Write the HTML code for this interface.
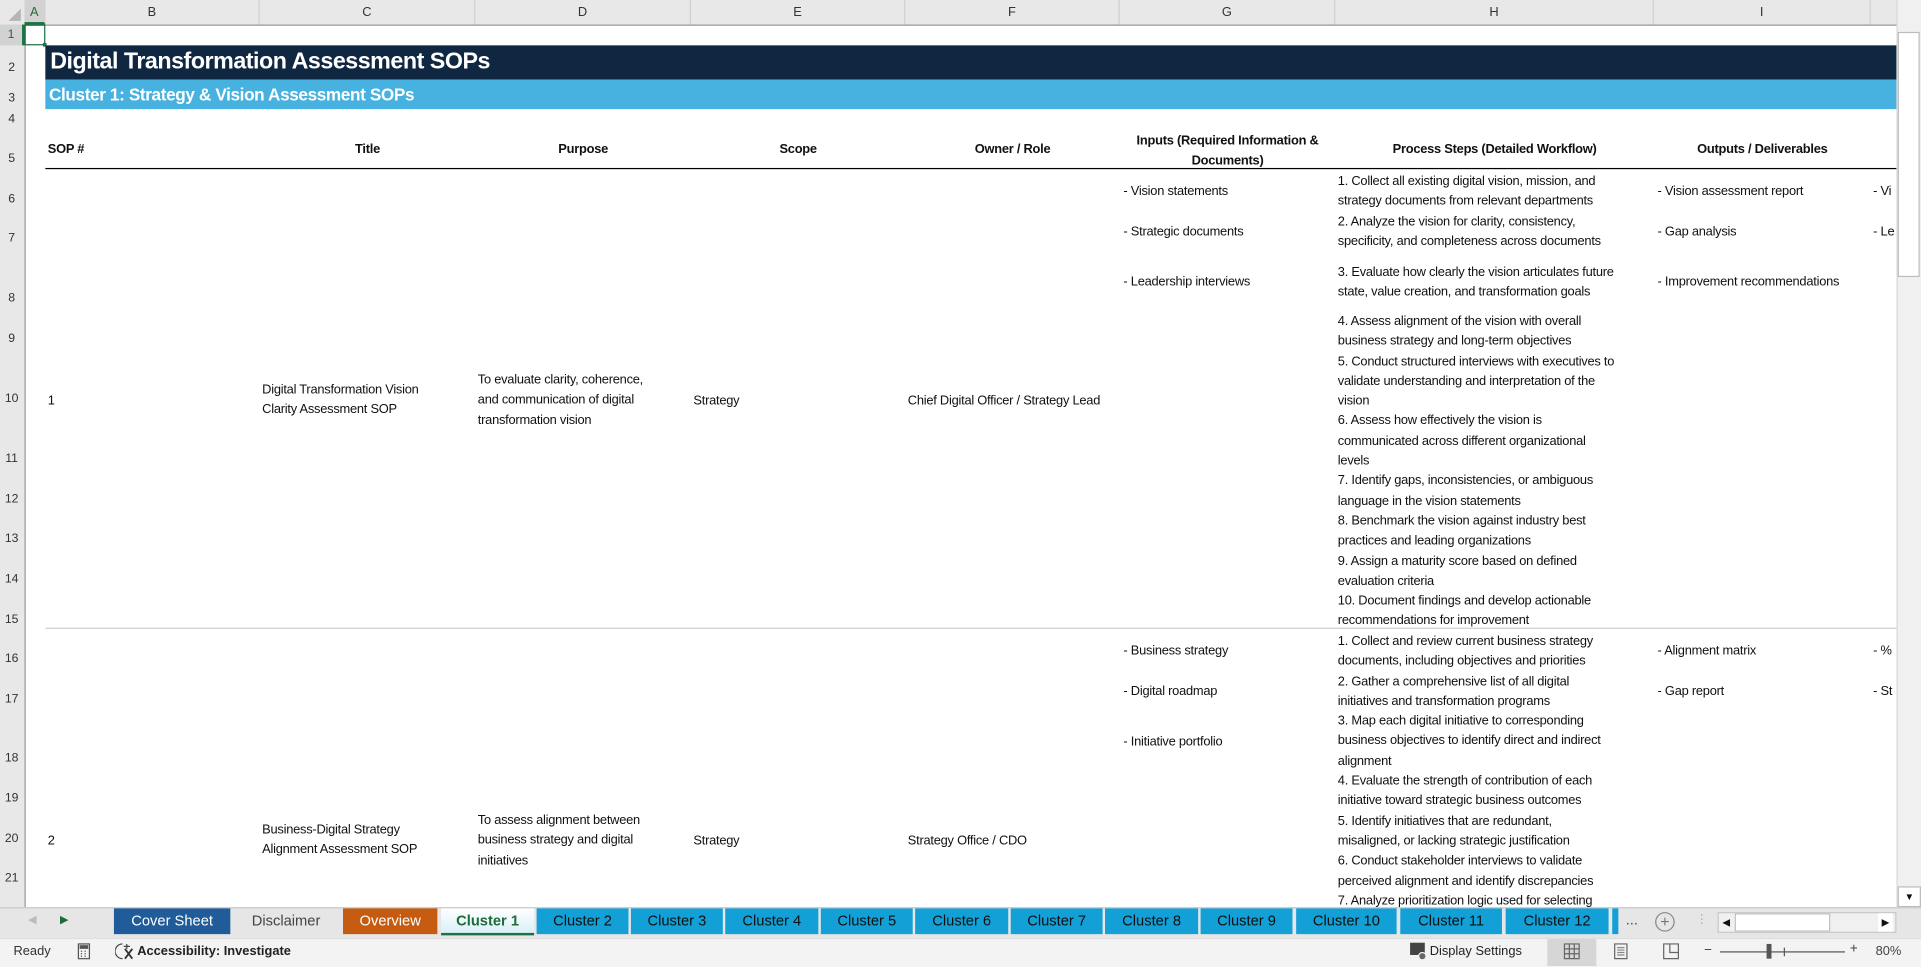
<!DOCTYPE html>
<html><head><meta charset="utf-8"><style>
html,body{margin:0;padding:0;width:1921px;height:966px;overflow:hidden;background:#fff}
#w{position:absolute;left:0;top:0;width:1568px;height:788px;transform:scale(1.2251,1.2259);transform-origin:0 0;font-family:"Liberation Sans Narrow","Liberation Sans",sans-serif;color:#111}
.a{position:absolute;white-space:nowrap}
.t{font-size:10.5px;letter-spacing:-0.2px;line-height:16.3px;margin-top:2px}
.h{font-size:10.5px;font-weight:bold;letter-spacing:-0.2px;margin-top:1px}
.ch{position:absolute;top:0;height:20px;line-height:20px;font-size:10.5px;color:#333;text-align:center;border-right:1px solid #d0d0d0}
.rh{position:absolute;left:0;width:19px;font-size:10px;color:#333;text-align:center;margin-top:2px}
.tab{position:absolute;top:741px;height:21px;line-height:20px;font-size:12px;text-align:center;color:#111;background:#12a0d7}
</style></head><body><div id="w">
<div class="a" style="left:0;top:0;width:1568px;height:20px;background:#e8e8e8;border-bottom:1px solid #9a9a9a"></div>
<div class="a" style="left:0;top:20px;width:20px;height:720px;background:#e8e8e8;border-right:1px solid #9a9a9a"></div>
<svg class="a" style="left:6px;top:6px" width="12" height="12"><path d="M11 1V11H1Z" fill="#b5b5b5"/></svg>
<div class="ch" style="left:20px;width:16px;background:#d2d2d2;color:#1e6b3a;border-bottom:2px solid #1e7145;height:18px">A</div>
<div class="ch" style="left:37px;width:174px">B</div>
<div class="ch" style="left:212px;width:175px">C</div>
<div class="ch" style="left:388px;width:175px">D</div>
<div class="ch" style="left:564px;width:174px">E</div>
<div class="ch" style="left:739px;width:174px">F</div>
<div class="ch" style="left:914px;width:175px">G</div>
<div class="ch" style="left:1090px;width:259px">H</div>
<div class="ch" style="left:1350px;width:176px">I</div>
<div class="rh" style="top:20px;height:17px;line-height:17px;background:#d2d2d2;color:#1e6b3a;border-right:2px solid #1e7145;width:18px;margin-top:0">1</div>
<div class="rh" style="top:48px">2</div><div class="rh" style="top:73px">3</div><div class="rh" style="top:90px">4</div><div class="rh" style="top:122px">5</div><div class="rh" style="top:155px">6</div><div class="rh" style="top:187px">7</div><div class="rh" style="top:236px">8</div><div class="rh" style="top:269px">9</div><div class="rh" style="top:318px">10</div><div class="rh" style="top:367px">11</div><div class="rh" style="top:400px">12</div><div class="rh" style="top:432px">13</div><div class="rh" style="top:465px">14</div><div class="rh" style="top:498px">15</div><div class="rh" style="top:530px">16</div><div class="rh" style="top:563px">17</div><div class="rh" style="top:611px">18</div><div class="rh" style="top:644px">19</div><div class="rh" style="top:677px">20</div><div class="rh" style="top:709px">21</div>
<div class="a" style="left:20px;top:20px;width:15px;height:15px;border:1.5px solid #1e7145"></div>
<div class="a" style="left:35px;top:35px;width:3px;height:3px;background:#1e7145"></div>
<div class="a" style="left:37px;top:37px;width:1511px;height:28px;background:#0f2740"></div>
<div class="a" style="left:41px;top:40px;font-size:19px;font-weight:bold;color:#fff;letter-spacing:-0.4px">Digital Transformation Assessment SOPs</div>
<div class="a" style="left:37px;top:65px;width:1511px;height:24px;background:#47b1e0"></div>
<div class="a" style="left:40px;top:69px;font-size:14px;font-weight:bold;color:#fff;letter-spacing:-0.3px">Cluster 1: Strategy &amp; Vision Assessment SOPs</div>
<div class="a h" style="left:39px;top:115px">SOP #</div>
<div class="a h" style="left:212px;width:176px;text-align:center;top:115px">Title</div>
<div class="a h" style="left:388px;width:176px;text-align:center;top:115px">Purpose</div>
<div class="a h" style="left:564px;width:175px;text-align:center;top:115px">Scope</div>
<div class="a h" style="left:739px;width:175px;text-align:center;top:115px">Owner / Role</div>
<div class="a h" style="left:914px;width:176px;text-align:center;top:106px;line-height:16px">Inputs (Required Information &amp;<br>Documents)</div>
<div class="a h" style="left:1090px;width:260px;text-align:center;top:115px">Process Steps (Detailed Workflow)</div>
<div class="a h" style="left:1350px;width:177px;text-align:center;top:115px">Outputs / Deliverables</div>
<div class="a" style="left:37px;top:137px;width:1511px;height:1px;background:#000"></div>
<div class="a" style="left:37px;top:512px;width:1511px;height:1px;background:#cfcfcf"></div>
<div class="a t" style="left:39px;top:317px">1</div>
<div class="a t" style="left:214px;top:308px">Digital Transformation Vision<br>Clarity Assessment SOP</div>
<div class="a t" style="left:390px;top:300px">To evaluate clarity, coherence,<br>and communication of digital<br>transformation vision</div>
<div class="a t" style="left:566px;top:317px">Strategy</div>
<div class="a t" style="left:741px;top:317px">Chief Digital Officer / Strategy Lead</div>
<div class="a t" style="left:917px;top:146px">- Vision statements</div>
<div class="a t" style="left:917px;top:179px">- Strategic documents</div>
<div class="a t" style="left:917px;top:220px">- Leadership interviews</div>
<div class="a t" style="left:1092px;top:138px">1. Collect all existing digital vision, mission, and<br>strategy documents from relevant departments<br>2. Analyze the vision for clarity, consistency,<br>specificity, and completeness across documents</div>
<div class="a t" style="left:1092px;top:212px">3. Evaluate how clearly the vision articulates future<br>state, value creation, and transformation goals</div>
<div class="a t" style="left:1092px;top:252px">4. Assess alignment of the vision with overall<br>business strategy and long-term objectives<br>5. Conduct structured interviews with executives to<br>validate understanding and interpretation of the<br>vision<br>6. Assess how effectively the vision is<br>communicated across different organizational<br>levels<br>7. Identify gaps, inconsistencies, or ambiguous<br>language in the vision statements<br>8. Benchmark the vision against industry best<br>practices and leading organizations<br>9. Assign a maturity score based on defined<br>evaluation criteria<br>10. Document findings and develop actionable<br>recommendations for improvement</div>
<div class="a t" style="left:1353px;top:146px">- Vision assessment report</div>
<div class="a t" style="left:1353px;top:179px">- Gap analysis</div>
<div class="a t" style="left:1353px;top:220px">- Improvement recommendations</div>
<div class="a t" style="left:1529px;top:146px;width:19px;overflow:hidden">- Vi</div>
<div class="a t" style="left:1529px;top:179px;width:19px;overflow:hidden">- Le</div>
<div class="a t" style="left:39px;top:676px">2</div>
<div class="a t" style="left:214px;top:667px">Business-Digital Strategy<br>Alignment Assessment SOP</div>
<div class="a t" style="left:390px;top:659px">To assess alignment between<br>business strategy and digital<br>initiatives</div>
<div class="a t" style="left:566px;top:676px">Strategy</div>
<div class="a t" style="left:741px;top:676px">Strategy Office / CDO</div>
<div class="a t" style="left:917px;top:521px">- Business strategy</div>
<div class="a t" style="left:917px;top:554px">- Digital roadmap</div>
<div class="a t" style="left:917px;top:595px">- Initiative portfolio</div>
<div class="a t" style="left:1092px;top:513px">1. Collect and review current business strategy<br>documents, including objectives and priorities<br>2. Gather a comprehensive list of all digital<br>initiatives and transformation programs<br>3. Map each digital initiative to corresponding<br>business objectives to identify direct and indirect<br>alignment<br>4. Evaluate the strength of contribution of each<br>initiative toward strategic business outcomes<br>5. Identify initiatives that are redundant,<br>misaligned, or lacking strategic justification<br>6. Conduct stakeholder interviews to validate<br>perceived alignment and identify discrepancies<br>7. Analyze prioritization logic used for selecting</div>
<div class="a t" style="left:1353px;top:521px">- Alignment matrix</div>
<div class="a t" style="left:1353px;top:554px">- Gap report</div>
<div class="a t" style="left:1529px;top:521px;width:19px;overflow:hidden">- %</div>
<div class="a t" style="left:1529px;top:554px;width:19px;overflow:hidden">- St</div>
<div class="a" style="left:1548px;top:0;width:20px;height:740px;background:#f0f0f0;border-left:1px solid #d8d8d8"></div>
<div class="a" style="left:1549px;top:26px;width:16px;height:198px;background:#fff;border:1px solid #bcbcbc"></div>
<div class="a" style="left:1549px;top:723px;width:17px;height:15px;background:#fff;border:1px solid #bcbcbc;font-size:8px;text-align:center;line-height:15px">▼</div>
<div class="a" style="left:0;top:740px;width:1568px;height:25px;background:#e6e6e6;border-top:1px solid #c8c8c8"></div>
<div class="a" style="left:23px;top:745px;font-size:9px;color:#bbb">◀</div>
<div class="a" style="left:49px;top:745px;font-size:9px;color:#1e6b3a">▶</div>
<div class="tab" style="left:93px;width:95px;background:#1f5c99;color:#fff">Cover Sheet</div>
<div class="tab" style="left:190px;width:87px;background:#e6e6e6;color:#444">Disclaimer</div>
<div class="tab" style="left:280px;width:77px;background:#c55a11;color:#fff">Overview</div>
<div class="tab" style="left:360px;width:76px;background:linear-gradient(#fff,#d8f0f8);color:#1e6b3a;font-weight:bold;border-bottom:2px solid #1e7145;height:20px">Cluster 1</div>
<div class="tab" style="left:438px;width:75px">Cluster 2</div>
<div class="tab" style="left:515px;width:75px">Cluster 3</div>
<div class="tab" style="left:592px;width:76px">Cluster 4</div>
<div class="tab" style="left:670px;width:75px">Cluster 5</div>
<div class="tab" style="left:747px;width:76px">Cluster 6</div>
<div class="tab" style="left:825px;width:75px">Cluster 7</div>
<div class="tab" style="left:902px;width:76px">Cluster 8</div>
<div class="tab" style="left:980px;width:75px">Cluster 9</div>
<div class="tab" style="left:1058px;width:82px">Cluster 10</div>
<div class="tab" style="left:1143px;width:83px">Cluster 11</div>
<div class="tab" style="left:1229px;width:84px">Cluster 12</div>
<div class="tab" style="left:1316px;width:5px"></div>
<div class="a" style="left:1327px;top:743px;font-size:12px;color:#1e6b3a">...</div>
<div class="a" style="left:1351px;top:744px;width:14px;height:14px;border:1px solid #888;border-radius:50%;font-size:13px;line-height:14px;text-align:center;color:#777">+</div>
<div class="a" style="left:1384px;top:745px;font-size:10px;color:#aaa">⋮</div>
<div class="a" style="left:1402px;top:744px;width:144px;height:15px;background:#f0f0f0;border:1px solid #c8c8c8"></div>
<div class="a" style="left:1403px;top:745px;width:12px;height:15px;font-size:8px;line-height:15px;text-align:center">◀</div>
<div class="a" style="left:1416px;top:745px;width:76px;height:13px;background:#fff;border:1px solid #c0c0c0"></div>
<div class="a" style="left:1533px;top:745px;width:12px;height:15px;font-size:8px;line-height:15px;text-align:center;background:#fff">▶</div>
<div class="a" style="left:0;top:765px;width:1568px;height:23px;background:#f3f3f3;border-top:1px solid #ddd"></div>
<div class="a" style="left:11px;top:770px;font-size:10.5px;color:#333">Ready</div>
<svg class="a" style="left:62px;top:769px" width="14" height="14"><rect x="2" y="1" width="9" height="12" fill="none" stroke="#555"/><rect x="3" y="2" width="7" height="3" fill="#555"/><path d="M4 7h1M7 7h1M4 9h1M7 9h1M4 11h1M7 11h1" stroke="#555"/></svg>
<svg class="a" style="left:94px;top:769px" width="16" height="14"><path d="M6 1a6 6 0 0 0 0 12" fill="none" stroke="#444"/><path d="M8 5l6 8M14 5l-6 8" stroke="#333" stroke-width="1.5"/><path d="M7 3h5M9.5 1v4" stroke="#444"/></svg>
<div class="a" style="left:112px;top:770px;font-size:10.5px;font-weight:bold;color:#222">Accessibility: Investigate</div>
<svg class="a" style="left:1150px;top:768px" width="16" height="16"><rect x="1" y="1" width="12" height="10" fill="#444"/><circle cx="11" cy="12" r="3" fill="#666" stroke="#f3f3f3"/></svg>
<div class="a" style="left:1167px;top:770px;font-size:10.5px;color:#222">Display Settings</div>
<div class="a" style="left:1263px;top:766px;width:40px;height:22px;background:#d6d6d6"></div>
<svg class="a" style="left:1276px;top:769px" width="14" height="14"><path d="M1 1h12v12H1zM1 5h12M1 9h12M5 1v12M9 1v12" fill="none" stroke="#666"/></svg>
<svg class="a" style="left:1316px;top:769px" width="14" height="14"><path d="M2 1h10v12H2z" fill="none" stroke="#666"/><path d="M4 4h6M4 6h6M4 8h6M4 10h6" stroke="#888"/></svg>
<svg class="a" style="left:1357px;top:769px" width="14" height="14"><path d="M1 1h12v12H1zM6 1v7h7" fill="none" stroke="#666"/></svg>
<div class="a" style="left:1391px;top:769px;font-size:11px;color:#444">−</div>
<div class="a" style="left:1404px;top:776px;width:102px;height:1px;background:#555"></div>
<div class="a" style="left:1442px;top:770px;width:4px;height:12px;background:#555"></div>
<div class="a" style="left:1456px;top:773px;width:1px;height:7px;background:#555"></div>
<div class="a" style="left:1510px;top:768px;font-size:11px;color:#444">+</div>
<div class="a" style="left:1531px;top:770px;font-size:10.5px;color:#444">80%</div>
</div></body></html>
